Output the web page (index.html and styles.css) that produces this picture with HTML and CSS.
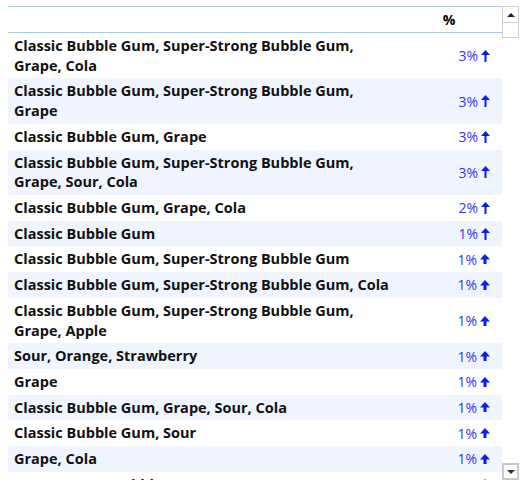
FILE: index.html
```html
<!DOCTYPE html>
<html lang="en">
<head>
  <meta charset="UTF-8" />
  <title>Flavour combinations</title>
  <link rel="stylesheet" href="styles.css">
</head>
<body>

  <div class="widget">
    <div class="table">
      <div class="head">
        <div class="cell name"></div>
        <div class="cell pct">%</div>
      </div>
      <div class="body" id="rows"></div>
    </div>

    <div class="scrollbar">
      <div class="btn up"><span class="tri-up"></span></div>
      <div class="thumb"></div>
      <div class="track"></div>
      <div class="btn down"><span class="tri-down"></span></div>
    </div>
  </div>

  <script>
    const data = [
      ["Classic Bubble Gum, Super-Strong Bubble Gum, Grape, Cola", "3%", "tall"],
      ["Classic Bubble Gum, Super-Strong Bubble Gum, Grape", "3%", "tall"],
      ["Classic Bubble Gum, Grape", "3%", "tall"],
      ["Classic Bubble Gum, Super-Strong Bubble Gum, Grape, Sour, Cola", "3%", "tall"],
      ["Classic Bubble Gum, Grape, Cola", "2%", "tall"],
      ["Classic Bubble Gum", "1%", "tall"],
      ["Classic Bubble Gum, Super-Strong Bubble Gum", "1%", "short"],
      ["Classic Bubble Gum, Super-Strong Bubble Gum, Cola", "1%", "short"],
      ["Classic Bubble Gum, Super-Strong Bubble Gum, Grape, Apple", "1%", "short"],
      ["Sour, Orange, Strawberry", "1%", "short"],
      ["Grape", "1%", "short"],
      ["Classic Bubble Gum, Grape, Sour, Cola", "1%", "short"],
      ["Classic Bubble Gum, Sour", "1%", "short"],
      ["Grape, Cola", "1%", "short"],
      ["Super-Strong Bubble Gum", "1%", "short"]
    ];

    const arrows = {
      tall: '<svg width="9" height="12" viewBox="0 0 9 12"><path d="M4.5 0 L9 5 L5.5 5 L5.5 12 L3.5 12 L3.5 5 L0 5 Z" fill="#0b1cf5"/></svg>',
      short: '<svg width="10" height="10" viewBox="0 0 10 10"><path d="M5 0 L10 5.5 L6.5 5.5 L6.5 10 L3.5 10 L3.5 5.5 L0 5.5 Z" fill="#0b1cf5"/></svg>'
    };

    const rows = document.getElementById("rows");
    data.forEach(([name, pct, kind], i) => {
      rows.innerHTML += `<div class="row${i % 2 ? " alt" : ""}">
        <div class="cell name">${name}</div>
        <div class="cell pct"><span class="val">${pct}</span>${arrows[kind]}</div>
      </div>`;
    });
  </script>

</body>
</html>
```

FILE: styles.css
```css
body {
  margin: 0;
  background: #fff;
  font-family: 'Open Sans', sans-serif;
  color: #111;
}

.widget {
  display: flex;
  margin: 6px 0 0 8px;
  width: 511px;
  height: 474px;
}

.table {
  width: 494px;
  overflow: hidden;
}

.head {
  display: flex;
  height: 25px;
  border-top: 1px solid #a9c9f2;
  border-bottom: 1px solid #a9c9f2;
  margin-right: -2px;
}

.head .pct {
  justify-content: center;
  font-weight: bold;
  font-size: 14px;
  color: #000;
  padding-right: 4px;
}

.row {
  display: flex;
}

.row.alt {
  background: #eff4fe;
}

.cell {
  display: flex;
  align-items: center;
}

.name {
  width: 378px;
  flex-shrink: 0;
  padding: 2.95px 6px;
  font-weight: bold;
  font-size: 14.5px;
  line-height: 19.8px;
  color: #111;
}

.pct {
  flex: 1;
  justify-content: flex-end;
  padding-right: 12px;
  font-size: 14px;
  color: #3434ef;
}

.val {
  margin-right: 3px;
}

.scrollbar {
  display: flex;
  flex-direction: column;
  width: 17px;
}

.btn {
  height: 15px;
  border: 1px solid #cfcfcf;
  display: flex;
  align-items: center;
  justify-content: center;
  background: #fff;
}

.btn.down {
  border: 2px solid #c8c8c8;
  height: 13px;
}

.thumb {
  height: 14px;
  border: 1px solid #cfcfcf;
  border-top: none;
}

.track {
  flex: 1;
}

.tri-up {
  width: 0;
  height: 0;
  border-left: 4px solid transparent;
  border-right: 4px solid transparent;
  border-bottom: 4px solid #222;
}

.tri-down {
  width: 0;
  height: 0;
  border-left: 4px solid transparent;
  border-right: 4px solid transparent;
  border-top: 4px solid #333;
}
```
